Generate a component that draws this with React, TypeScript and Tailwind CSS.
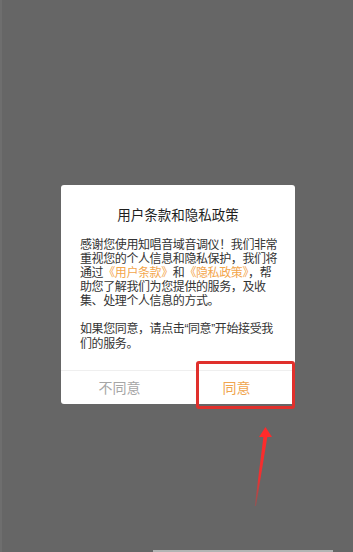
export default function App() {
  const font = { fontFamily: '"Noto Sans CJK SC", "Noto Sans", sans-serif' };

  return (
    <div className="relative h-[552px] w-[353px] overflow-hidden bg-[#666666]" style={font}>
      <div className="absolute left-0 top-0 h-full w-[2px] bg-[#6e6e6e]" />

      <div className="ml-[61px] pt-[185px]">
        <div className="w-[234px] rounded-[3px] bg-white">
          <div className="pt-[20px] text-center text-[13.5px] leading-[18px] text-[#1e1e1e]">
            用户条款和隐私政策
          </div>
          <div className="mt-[14px] px-[19px] pb-[20px] text-[12px] leading-[14px] tracking-[-0.4px] text-[#333] whitespace-nowrap">
            <p>感谢您使用知唱音域音调仪！我们非常</p>
            <p>重视您的个人信息和隐私保护，我们将</p>
            <p>
              通过<span className="text-[#f3a64c]">《用户条款》</span>和
              <span className="text-[#f3a64c]">《隐私政策》</span>，帮
            </p>
            <p>助您了解我们为您提供的服务，及收</p>
            <p>集、处理个人信息的方式。</p>
            <p className="mt-[14px]">
              如果您同意，请点击<span className="font-['Liberation_Sans']">“</span>同意
              <span className="font-['Liberation_Sans']">”</span>开始接受我
            </p>
            <p>们的服务。</p>
          </div>
          <div className="flex h-[34px] border-t border-[#efefef] text-[14px]">
            <button className="flex flex-1 items-center justify-center text-[#a6a6a6]">不同意</button>
            <button className="flex flex-1 items-center justify-center text-[#f0a54e]">同意</button>
          </div>
        </div>
      </div>

      <div className="absolute left-[196px] top-[361px] h-[48px] w-[99px] rounded-[3px] border-[3px] border-[#e0302c]" />

      <svg className="absolute left-0 top-0" width="353" height="552" viewBox="0 0 353 552">
        <defs>
          <linearGradient id="fade" x1="0" y1="0" x2="0" y2="1">
            <stop offset="0" stopColor="#ff2a2a" />
            <stop offset="0.6" stopColor="#f03030" />
            <stop offset="1" stopColor="#d03a3a" stopOpacity="0.4" />
          </linearGradient>
        </defs>
        <path d="M263.5 436 L267.5 436 L256 506 L254.8 506 Z" fill="url(#fade)" />
        <path d="M265.5 427 L272 437 L259 437 Z" fill="#ff2a2a" />
      </svg>

      <div className="absolute bottom-0 left-[153px] h-[2px] w-[180px] bg-[#b3b3b3]" />
    </div>
  );
}
